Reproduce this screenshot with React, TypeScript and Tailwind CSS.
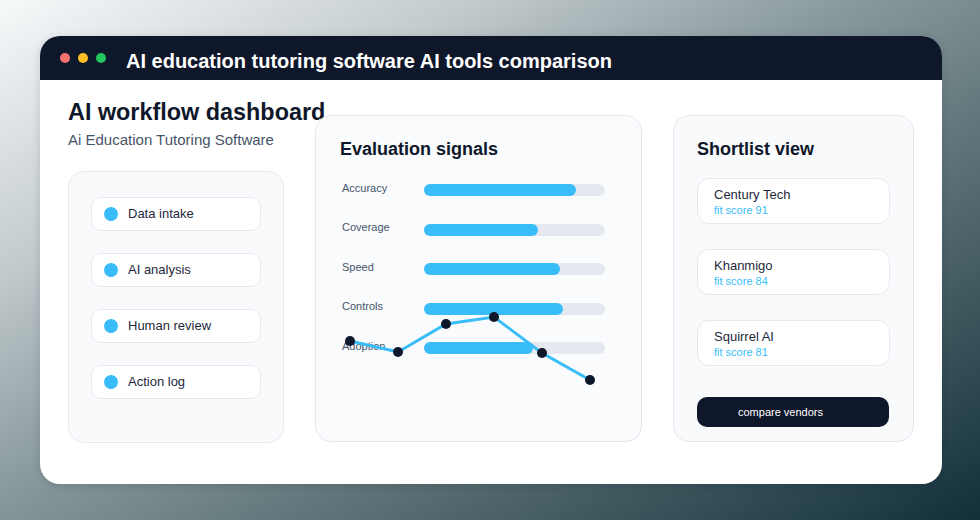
import React from "react";

const steps = ["Data intake", "AI analysis", "Human review", "Action log"];

const signals = [
  { label: "Accuracy", value: 84 },
  { label: "Coverage", value: 63 },
  { label: "Speed", value: 75 },
  { label: "Controls", value: 77 },
  { label: "Adoption", value: 60 },
];

const vendors = [
  { name: "Century Tech", score: 91 },
  { name: "Khanmigo", score: 84 },
  { name: "Squirrel AI", score: 81 },
];

// trend points, relative to the evaluation card
const trend = [
  [34, 225],
  [82, 236],
  [130, 208],
  [178, 201],
  [226, 237],
  [274, 264],
];

export default function App() {
  return (
    <div
      className="h-[520px] w-[980px] overflow-hidden bg-[linear-gradient(150deg,#f7f9fa_0%,#c3cbce_25%,#8a9a9e_45%,#5d7377_65%,#12303a_100%)] pt-[36px] pl-[40px]"
      style={{ fontFamily: '"Liberation Sans", Arial, sans-serif' }}
    >
      <div className="w-[902px] h-[448px] overflow-hidden rounded-[20px] bg-white shadow-[0_2px_8px_rgba(15,23,42,0.15)]">
        <div className="flex h-[44px] items-center bg-[#0f172a] pl-[20px]">
          <div className="flex gap-[8px]">
            <span className="h-[10px] w-[10px] rounded-full bg-[#f87171]" />
            <span className="h-[10px] w-[10px] rounded-full bg-[#fbbf24]" />
            <span className="h-[10px] w-[10px] rounded-full bg-[#22c55e]" />
          </div>
          <h1 className="ml-[20px] mt-[6px] text-[20px] font-bold leading-none text-white">
            AI education tutoring software AI tools comparison
          </h1>
        </div>

        <div className="flex pl-[28px] pt-[18px]">
          <div className="flex w-[216px] flex-col">
            <h2 className="whitespace-nowrap text-[23.4px] font-bold leading-[28px] text-[#0f172a]">
              AI workflow dashboard
            </h2>
            <p className="mt-[4px] text-[15px] leading-[20px] text-[#475569]">Ai Education Tutoring Software</p>
            <div className="mt-[21px] flex h-[272px] flex-col gap-[22px] rounded-[16px] border border-[#e5e9ef] bg-[#f8fafc] px-[22px] pt-[25px]">
              {steps.map((s) => (
                <div
                  key={s}
                  className="flex h-[34px] items-center rounded-[10px] border border-[#e5e9ef] bg-white pl-[12px]"
                >
                  <span className="h-[14px] w-[14px] rounded-full bg-[#38bdf8]" />
                  <span className="ml-[10px] text-[13px] text-[#1e293b]">{s}</span>
                </div>
              ))}
            </div>
          </div>

          <div className="relative ml-[31px] mt-[17px] h-[327px] w-[327px] rounded-[16px] border border-[#e5e9ef] bg-[#f9fbfd] px-[24px] pt-[22px]">
            <h3 className="text-[18px] font-bold leading-[22px] text-[#0f172a]">Evaluation signals</h3>
            <div className="mt-[24px] flex flex-col gap-[27.5px]">
              {signals.map((s) => (
                <div key={s.label} className="flex h-[12px] items-center">
                  <span className="w-[84px] pl-[2px] text-[11px] leading-none text-[#475569] -translate-y-[2px]">{s.label}</span>
                  <div className="h-[12px] w-[181px] rounded-full bg-[#e5e9ef]">
                    <div className="h-full rounded-full bg-[#38bdf8]" style={{ width: `${s.value}%` }} />
                  </div>
                </div>
              ))}
            </div>
            <svg className="absolute left-0 top-0" width="327" height="327">
              <polyline
                points={trend.map((p) => p.join(",")).join(" ")}
                fill="none"
                stroke="#38bdf8"
                strokeWidth="3"
              />
              {trend.map(([x, y]) => (
                <circle key={x} cx={x} cy={y} r="5" fill="#0f172a" />
              ))}
            </svg>
          </div>

          <div className="ml-[31px] mt-[17px] flex h-[327px] w-[241px] flex-col rounded-[16px] border border-[#e5e9ef] bg-[#f8fafc] px-[23px] pt-[22px]">
            <h3 className="text-[18px] font-bold leading-[22px] text-[#0f172a]">Shortlist view</h3>
            <div className="mt-[18px] flex flex-col gap-[25px]">
              {vendors.map((v) => (
                <div
                  key={v.name}
                  className="flex h-[46px] flex-col justify-center rounded-[12px] border border-[#e5e9ef] bg-white pl-[16px] pt-[1px]"
                >
                  <span className="text-[13px] leading-[16px] text-[#1e293b]">{v.name}</span>
                  <span className="text-[11px] leading-[14px] text-[#38bdf8]">fit score {v.score}</span>
                </div>
              ))}
            </div>
            <button className="mt-[31px] h-[30px] w-[192px] rounded-[10px] bg-[#0f172a] pl-[41px] text-left text-[11px] text-white">
              compare vendors
            </button>
          </div>
        </div>
      </div>
    </div>
  );
}
